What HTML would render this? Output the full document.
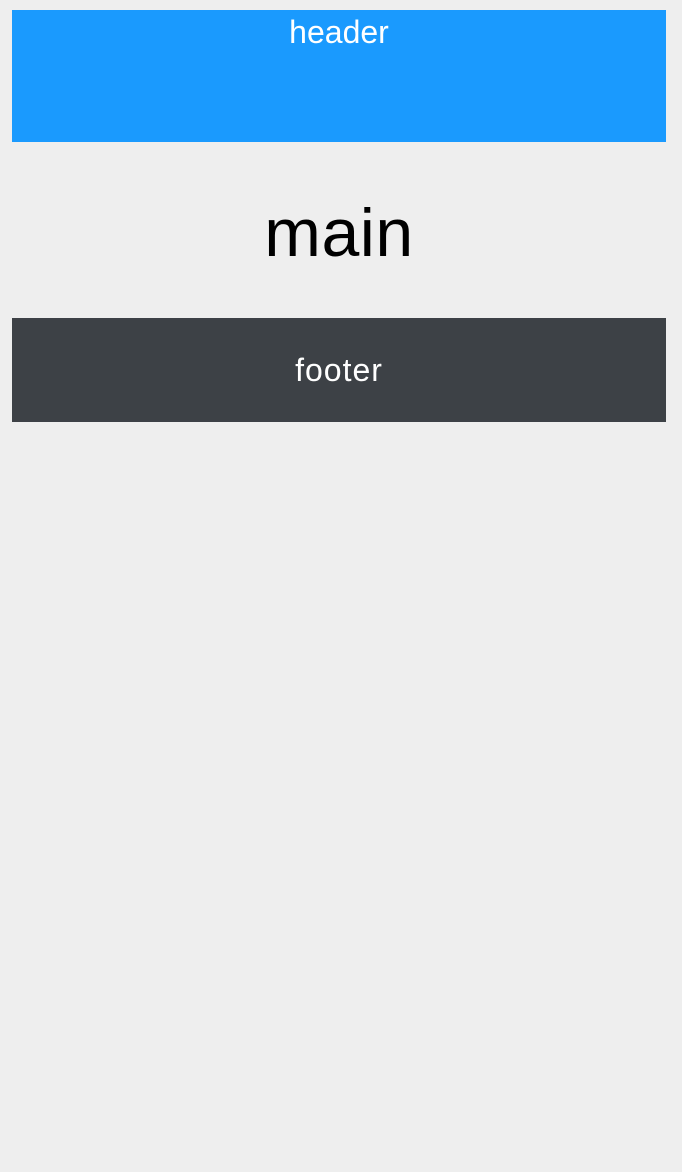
<!DOCTYPE html>
<html><head><style>
html,body{margin:0;padding:0;background:#eeeeee;width:682px;height:1172px;overflow:hidden;font-family:"Liberation Sans",sans-serif;}
.h{position:absolute;left:12px;top:10px;width:654px;height:132px;background:#1a9afe;color:#fff;text-align:center;font-size:32px;line-height:44px;}
.m{position:absolute;left:12px;top:191px;width:654px;text-align:center;font-size:68px;line-height:84px;color:#000;letter-spacing:0.5px;}
.f{position:absolute;left:12px;top:318px;width:654px;height:104px;background:#3d4146;color:#fff;text-align:center;font-size:32px;line-height:104px;letter-spacing:1px;}
</style></head><body>
<div class="h">header</div>
<div class="m">main</div>
<div class="f">footer</div>
</body></html>
